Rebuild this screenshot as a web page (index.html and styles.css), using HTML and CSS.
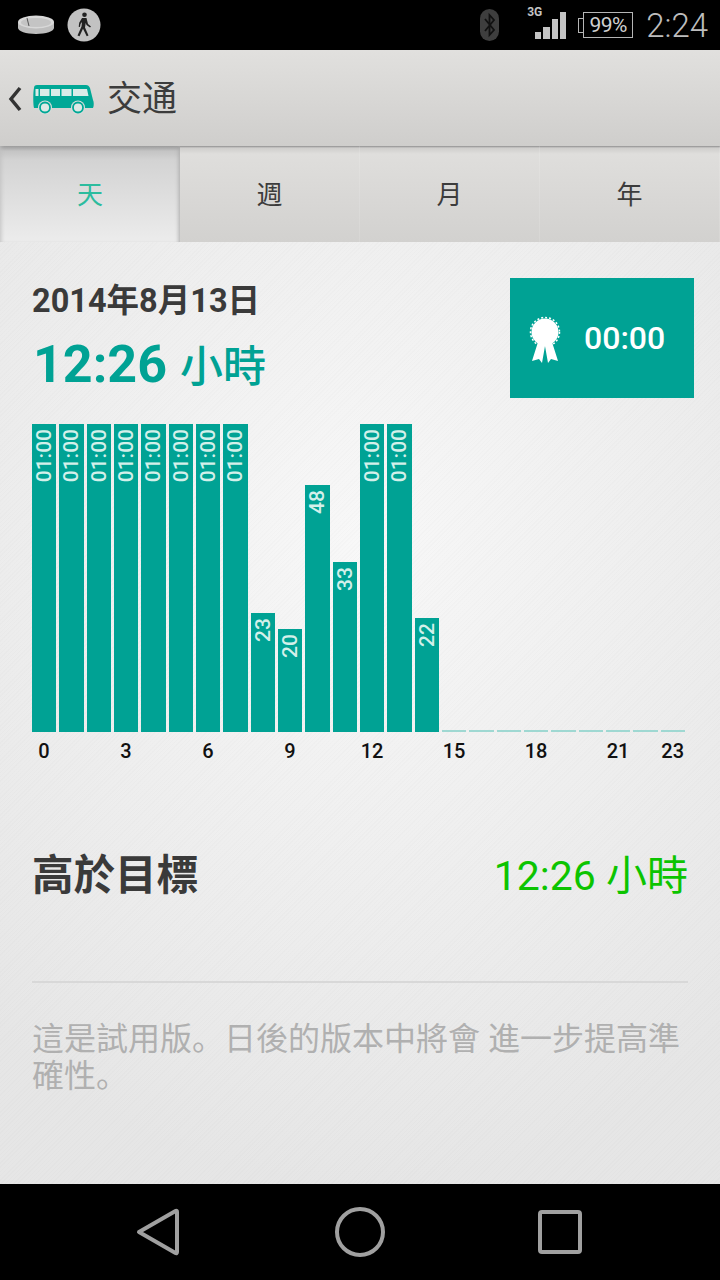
FILE: index.html
```html
<!DOCTYPE html>
<html lang="zh-Hant">
<head>
    <meta charset="UTF-8">
    <meta name="viewport" content="width=device-width, initial-scale=1.0">
    <title>交通</title>
    <link rel="stylesheet" href="styles.css">
</head>
<body>
    <div class="phone">
        <div class="status-bar">
            <svg class="band-icon" width="38" height="20" viewBox="0 0 38 20">
                <path d="M1 7v6c0 3 8 6 18 6s18-3 18-6V7z" fill="#bdbdbd"/>
                <ellipse cx="19" cy="7" rx="18" ry="6.5" fill="#d8d8d8"/>
                <ellipse cx="19" cy="7.5" rx="15" ry="4.5" fill="#c4c4c4"/>
                <path d="M10 3l2 8" stroke="#555" stroke-width="1"/>
            </svg>
            <svg class="walk-icon" width="34" height="34" viewBox="0 0 34 34">
                <circle cx="17" cy="17" r="16.5" fill="#c2c2c2"/>
                <circle cx="17.5" cy="6.8" r="2.3" fill="#222"/>
                <path d="M15 10h4.500l1.500 6 3 2.500-1 1-3.500-2.500-.8-2-.7 4.500 3.500 8-1.800.7-3.700-7.500-3.500 7.500-2-.8 4-9 .5-4.500-1.500 2-.5 3-1.300-.2.500-4z" fill="#222"/>
            </svg>
            <span class="status-spacer"></span>
            <svg class="bt-icon" width="19" height="32" viewBox="0 0 19 32">
                <rect width="19" height="32" rx="9.500" fill="#3e3e3e"/>
                <path d="M5 10l9 11-4.500 5V6l4.500 5-9 11" fill="none" stroke="#111" stroke-width="1.800"/>
            </svg>
            <div class="signal">
                <span class="net-label">3G</span>
                <svg width="32" height="27" viewBox="0 0 32 27">
                    <rect x="0" y="20" width="6" height="7" fill="#c4c4c4"/>
                    <rect x="8" y="15" width="7" height="12" fill="#c4c4c4"/>
                    <rect x="17" y="7" width="6" height="20" fill="#c4c4c4"/>
                    <rect x="25" y="0" width="6" height="27" fill="#c4c4c4"/>
                </svg>
            </div>
            <div class="battery"><span>99%</span></div>
            <span class="clock">2:24</span>
        </div>

        <div class="action-bar">
            <svg class="back-icon" width="14" height="26" viewBox="0 0 14 26">
                <path d="M12 2L3 13l9 11" fill="none" stroke="#333" stroke-width="3.500"/>
            </svg>
            <svg class="bus-icon" width="61" height="30" viewBox="0 0 61 30">
                <path d="M4 1h49c2 0 3 1 4 3l3 12c1 2 1 6 0 8H1C0 21 0 8 1 4c0-2 1-3 3-3z" fill="#00a896"/>
                <path d="M2.500 5h3v7h-3zM7 5h9.500v7H7zM18 5h9v7h-9zM28.500 5h10v7h-10zM40 5h14l1.500 7H40z" fill="#d9ece8"/>
                <circle cx="12" cy="23.500" r="7" fill="#d8dcda"/>
                <circle cx="45" cy="23.500" r="7" fill="#d8dcda"/>
                <circle cx="12" cy="23.500" r="5" fill="#dfe8e5" stroke="#00a896" stroke-width="1.800"/>
                <circle cx="45" cy="23.500" r="5" fill="#dfe8e5" stroke="#00a896" stroke-width="1.800"/>
            </svg>
            <h1 class="page-title">交通</h1>
        </div>

        <div class="tabs">
            <div class="tab tab-active">天</div>
            <div class="tab">週</div>
            <div class="tab">月</div>
            <div class="tab">年</div>
        </div>

        <div class="content">
            <div class="summary">
                <div>
                    <div class="date">2014年8月13日</div>
                    <div class="total">12:26 <span class="unit">小時</span></div>
                </div>
                <div class="goal-badge">
                    <svg width="32" height="48" viewBox="0 0 32 48">
                        <path d="M9 26L3 45l7-2 3 4 3-17 3 17 3-4 7 2-6-19z" fill="#fff"/>
                        <circle cx="16" cy="16" r="13.500" fill="#fff"/>
                        <circle cx="16" cy="16" r="14.500" fill="none" stroke="#fff" stroke-width="1.500" stroke-dasharray="2 2"/>
                    </svg>
                    <span class="goal-time">00:00</span>
                </div>
            </div>

            <div class="chart">
                <div class="bar-cell"><div class="bar" style="height:308px"><span>01:00</span></div></div>
                <div class="bar-cell"><div class="bar" style="height:308px"><span>01:00</span></div></div>
                <div class="bar-cell"><div class="bar" style="height:308px"><span>01:00</span></div></div>
                <div class="bar-cell"><div class="bar" style="height:308px"><span>01:00</span></div></div>
                <div class="bar-cell"><div class="bar" style="height:308px"><span>01:00</span></div></div>
                <div class="bar-cell"><div class="bar" style="height:308px"><span>01:00</span></div></div>
                <div class="bar-cell"><div class="bar" style="height:308px"><span>01:00</span></div></div>
                <div class="bar-cell"><div class="bar" style="height:308px"><span>01:00</span></div></div>
                <div class="bar-cell"><div class="bar" style="height:119px"><span>23</span></div></div>
                <div class="bar-cell"><div class="bar" style="height:103px"><span>20</span></div></div>
                <div class="bar-cell"><div class="bar" style="height:247px"><span>48</span></div></div>
                <div class="bar-cell"><div class="bar" style="height:170px"><span>33</span></div></div>
                <div class="bar-cell"><div class="bar" style="height:308px"><span>01:00</span></div></div>
                <div class="bar-cell"><div class="bar" style="height:308px"><span>01:00</span></div></div>
                <div class="bar-cell"><div class="bar" style="height:114px"><span>22</span></div></div>
                <div class="bar-cell"><div class="bar-empty"></div></div>
                <div class="bar-cell"><div class="bar-empty"></div></div>
                <div class="bar-cell"><div class="bar-empty"></div></div>
                <div class="bar-cell"><div class="bar-empty"></div></div>
                <div class="bar-cell"><div class="bar-empty"></div></div>
                <div class="bar-cell"><div class="bar-empty"></div></div>
                <div class="bar-cell"><div class="bar-empty"></div></div>
                <div class="bar-cell"><div class="bar-empty"></div></div>
                <div class="bar-cell"><div class="bar-empty"></div></div>
            </div>

            <div class="axis">
                <span class="tick">0</span><span></span><span></span>
                <span class="tick">3</span><span></span><span></span>
                <span class="tick">6</span><span></span><span></span>
                <span class="tick">9</span><span></span><span></span>
                <span class="tick">12</span><span></span><span></span>
                <span class="tick">15</span><span></span><span></span>
                <span class="tick">18</span><span></span><span></span>
                <span class="tick">21</span><span></span>
                <span class="tick">23</span>
            </div>

            <div class="goal-row">
                <span class="goal-label">高於目標</span>
                <span class="goal-value">12:26 小時</span>
            </div>

            <div class="note">這是試用版。日後的版本中將會 進一步提高準確性。</div>
        </div>

        <div class="nav-bar">
            <svg class="nav-back" width="44" height="50" viewBox="0 0 44 50">
                <path d="M3 25L39.500 4c1-.5 1.500 0 1.500 1v40c0 1-.5 1.500-1.500 1z" fill="none" stroke="#a0a0a0" stroke-width="4" stroke-linejoin="round"/>
            </svg>
            <svg width="52" height="52" viewBox="0 0 52 52">
                <circle cx="26" cy="26" r="23" fill="none" stroke="#a0a0a0" stroke-width="4"/>
            </svg>
            <svg width="44" height="44" viewBox="0 0 44 44">
                <rect x="2" y="2" width="40" height="40" rx="2" fill="none" stroke="#a0a0a0" stroke-width="4"/>
            </svg>
        </div>
    </div>
</body>
</html>
```

FILE: styles.css
```css
* {
    box-sizing: border-box;
}

body {
    margin: 0;
    font-family: Roboto, "Noto Sans CJK SC", sans-serif;
    font-feature-settings: "locl" 0;
    background-color: #000;
}

.phone {
    width: 720px;
    height: 1280px;
    display: flex;
    flex-direction: column;
    overflow: hidden;
}

/* status bar */
.status-bar {
    height: 50px;
    flex: none;
    background-color: #000;
    display: flex;
    align-items: center;
    padding: 0 12px 0 17px;
}

.band-icon {
    margin-right: 12px;
}

.status-spacer {
    flex: 1;
}

.bt-icon {
    margin-right: 36px;
}

.signal {
    position: relative;
    width: 32px;
    height: 50px;
    margin-right: 11px;
    display: flex;
    align-items: flex-end;
}

.signal svg {
    display: block;
    margin-bottom: 11px;
}

.net-label {
    position: absolute;
    left: -8px;
    top: 5px;
    font-size: 12px;
    font-weight: 700;
    color: #c4c4c4;
}

.battery {
    position: relative;
    width: 50px;
    height: 26px;
    border: 1.500px solid #b5b5b5;
    margin-left: 5px;
    margin-right: 13px;
    display: flex;
    align-items: center;
    justify-content: center;
    color: #d0d0d0;
    font-size: 21px;
    letter-spacing: -0.500px;
}

.battery::before {
    content: "";
    position: absolute;
    left: -6px;
    top: 5px;
    width: 5px;
    height: 13px;
    border: 1.500px solid #b5b5b5;
    border-right: none;
}

.clock {
    color: #bdbdbd;
    font-size: 33px;
    font-weight: 300;
}

/* action bar */
.action-bar {
    height: 96px;
    flex: none;
    background: linear-gradient(#e1e0de, #cfcecc);
    display: flex;
    align-items: center;
    padding: 1px 0 0 8px;
}

.back-icon {
    margin-right: 11px;
}

.bus-icon {
    margin-right: 13px;
}

.page-title {
    margin: 0;
    padding-bottom: 7px;
    font-size: 35px;
    font-weight: 400;
    color: #3c3c3c;
}

/* tabs */
.tabs {
    height: 96px;
    flex: none;
    display: grid;
    grid-template-columns: repeat(4, 1fr);
    background: linear-gradient(#8f8f8f, #cfcecc 2px, #dfdedc 8px, #d2d1cf);
}

.tab {
    display: flex;
    align-items: center;
    justify-content: center;
    padding-bottom: 3px;
    font-size: 26px;
    color: #3c3c3c;
    border-right: 1px solid rgba(255, 255, 255, 0.12);
}

.tab-active {
    color: #2cbc9e;
    background: linear-gradient(#9a9a9a, #c4c4c4 5px, #d3d3d3 14px, #ececec);
    box-shadow: inset -4px 0 4px -3px #a8a8a8, inset 4px 0 4px -3px #c0c0c0;
    border-right: none;
}

/* main */
.content {
    flex: 1;
    padding: 36px 32px 0;
    background:
        repeating-linear-gradient(135deg, rgba(0, 0, 0, 0.012) 0 1px, transparent 1px 3px),
        radial-gradient(ellipse 560px 640px at 360px 300px, #f8f8f8, #e6e6e6);
}

.summary {
    display: flex;
    justify-content: space-between;
    margin-right: -6px;
    height: 120px;
}

.date {
    font-size: 32.500px;
    font-weight: 700;
    line-height: 46px;
    color: #3a3a3a;
}

.total {
    font-size: 52px;
    font-weight: 700;
    line-height: 62px;
    margin-top: 10px;
    margin-left: 1px;
    color: #00a294;
}

.total .unit {
    font-size: 43px;
    font-weight: 500;
}

.goal-badge {
    width: 184px;
    height: 120px;
    background-color: #00a294;
    display: flex;
    align-items: center;
    padding-left: 19px;
    gap: 23px;
}

.goal-badge svg {
    margin-top: 3px;
}

.goal-time {
    font-size: 32px;
    font-weight: 500;
    color: #fff;
}

.chart {
    margin-top: 26px;
    height: 308px;
    display: grid;
    grid-template-columns: repeat(24, 1fr);
    align-items: end;
}

.bar-cell {
    padding-right: 3px;
}

.bar {
    background-color: #00a294;
    display: flex;
    justify-content: center;
    align-items: flex-start;
}

.bar span {
    writing-mode: vertical-rl;
    transform: rotate(180deg);
    font-size: 21px;
    font-weight: 500;
    line-height: 24px;
    padding-bottom: 5px;
    color: #d3f0ea;
}

.bar-empty {
    height: 2px;
    background-color: #9fd8d2;
}

.axis {
    margin-top: 6px;
    display: grid;
    grid-template-columns: repeat(24, 1fr);
    height: 26px;
}

.tick {
    width: 24px;
    display: flex;
    justify-content: center;
    font-size: 20px;
    font-weight: 500;
    line-height: 26px;
    color: #111;
    white-space: nowrap;
}

.goal-row {
    margin-top: 78px;
    height: 60px;
    display: flex;
    justify-content: space-between;
    align-items: center;
}

.goal-label {
    font-size: 41.500px;
    font-weight: 700;
    color: #3a3a3a;
}

.goal-value {
    font-size: 41px;
    color: #0cc400;
}

.note {
    margin-top: 79px;
    padding-top: 38px;
    border-top: 2px solid #d8d8d8;
    font-size: 32px;
    line-height: 37px;
    color: #b0b0b0;
}

/* nav bar */
.nav-bar {
    height: 96px;
    flex: none;
    background-color: #000;
    display: grid;
    grid-template-columns: repeat(3, 200px);
    justify-content: center;
    justify-items: center;
    align-items: center;
}

.nav-back {
    margin-right: 4px;
}
```
